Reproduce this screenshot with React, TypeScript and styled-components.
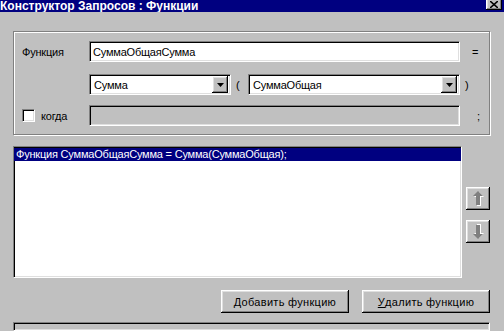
import styled, {createGlobalStyle, css} from "styled-components";

const GlobalStyle = createGlobalStyle`
  html, body {
    margin: 0;
    padding: 0;
    background: #c0c0c0;
  }
  body {
    font-family: "Liberation Sans", Arial, sans-serif;
    font-size: 11px;
    letter-spacing: -0.2px;
    color: #000;
  }
`;

const sunken = css`
  box-sizing: border-box;
  border-top: 1px solid #808080;
  border-left: 1px solid #808080;
  border-right: 1px solid #ffffff;
  border-bottom: 1px solid #ffffff;
  box-shadow: inset 1px 1px 0 #000000, inset -1px -1px 0 #dfdfdf;
`;

const raised = css`
  box-sizing: border-box;
  border: 0;
  background: #c0c0c0;
  box-shadow: inset -1px -1px 0 #000000, inset 1px 1px 0 #ffffff,
    inset -2px -2px 0 #808080, inset 2px 2px 0 #dfdfdf;
`;

const Window = styled.div`
  width: 504px;
  height: 331px;
  overflow: hidden;
  background: #c0c0c0;
  display: flex;
  flex-direction: column;
`;

const TitleBar = styled.div`
  height: 12px;
  flex-shrink: 0;
  background: #000080;
  display: flex;
  justify-content: space-between;
  align-items: flex-start;
  overflow: hidden;
`;

const Title = styled.span`
  color: #fff;
  font-weight: bold;
  font-size: 12px;
  letter-spacing: 0;
  line-height: 12px;
  white-space: nowrap;
`;

const CloseButton = styled.div`
  ${raised};
  width: 16px;
  height: 14px;
  margin-top: -4px;
  margin-right: 2px;
  display: flex;
  align-items: center;
  justify-content: center;
  padding-top: 2px;
`;

const Content = styled.div`
  flex: 1;
  display: flex;
  flex-direction: column;
  padding: 19px 14px 0 13px;
`;

const GroupBox = styled.div`
  box-sizing: border-box;
  height: 104px;
  border: 1px solid #808080;
  box-shadow: inset 1px 1px 0 #ffffff, 1px 1px 0 #ffffff;
  padding: 9px 0 0 8px;
`;

const Row = styled.div<{ $top: number }>`
  display: flex;
  align-items: center;
  height: 21px;
  margin-top: ${p => p.$top}px;
`;

const Label = styled.div`
  width: 67px;
  flex-shrink: 0;
  display: flex;
  align-items: center;
  white-space: nowrap;
`;

const Field = styled.div`
  width: 371px;
  height: 21px;
  flex-shrink: 0;
  display: flex;
  align-items: center;
`;

const TextBox = styled.div<{ $disabled?: boolean }>`
  ${sunken};
  width: 100%;
  height: 100%;
  background: ${p => (p.$disabled ? "#c0c0c0" : "#ffffff")};
  padding: 0 3px;
  display: flex;
  align-items: center;
  white-space: nowrap;
`;

const Suffix = styled.span<{ $left: number }>`
  margin-left: ${p => p.$left}px;
  white-space: nowrap;
`;

const Combo = styled.div<{ $width: number }>`
  ${sunken};
  width: ${p => p.$width}px;
  height: 21px;
  background: #fff;
  display: flex;
  align-items: center;
  justify-content: space-between;
  padding: 2px 2px 2px 4px;
  flex-shrink: 0;
`;

const DropButton = styled.div`
  ${raised};
  width: 16px;
  height: 17px;
  display: flex;
  align-items: center;
  justify-content: center;
`;

const Paren = styled.span`
  margin-left: 5px;
  margin-right: auto;
`;

const CheckBox = styled.div`
  ${sunken};
  width: 13px;
  height: 13px;
  background: #fff;
  flex-shrink: 0;
`;

const CheckLabel = styled.span`
  margin-left: 6px;
`;

const ListRow = styled.div`
  display: flex;
  margin-top: 11px;
`;

const ListBox = styled.div`
  ${sunken};
  width: 449px;
  height: 132px;
  background: #fff;
  padding: 1px 0 0 0;
`;

const ListItem = styled.div<{ $selected?: boolean }>`
  height: 13px;
  line-height: 13px;
  padding-left: 2px;
  white-space: nowrap;
  background: ${p => (p.$selected ? "#000080" : "transparent")};
  color: ${p => (p.$selected ? "#ffffff" : "#000000")};
`;

const ArrowColumn = styled.div`
  display: flex;
  flex-direction: column;
  gap: 10px;
  margin-left: 4px;
  padding-top: 41px;
`;

const ArrowButton = styled.div`
  ${raised};
  width: 24px;
  height: 23px;
  display: flex;
  align-items: center;
  justify-content: center;
`;

const ButtonRow = styled.div`
  display: flex;
  justify-content: flex-end;
  gap: 13px;
  margin-top: 12px;
`;

const PushButton = styled.div`
  ${raised};
  width: 128px;
  height: 23px;
  display: flex;
  align-items: center;
  justify-content: center;
  white-space: nowrap;
  letter-spacing: 0.3px;
`;

const Accel = styled.span`
  text-decoration: underline;
`;

const StatusPanel = styled.div`
  ${sunken};
  margin-top: 9px;
  flex: 1;
  background: #c0c0c0;
`;

function DownTriangle() {
  return (
    <svg width="7" height="4" viewBox="0 0 7 4">
      <polygon points="0,0 7,0 3.5,4" fill="#000" />
    </svg>
  );
}

function Arrow({down}: { down?: boolean }) {
  const head = "0,5 5,0 10,5";
  return (
    <svg width="11" height="15" viewBox="0 0 11 15"
         style={down ? {transform: "scaleY(-1)"} : undefined}>
      <g transform="translate(1,1)">
        <polygon points={head} fill="#fff" />
        <rect x="3" y="5" width="4" height="9" fill="#fff" />
      </g>
      <polygon points={head} fill="#808080" />
      <rect x="3" y="5" width="4" height="9" fill="#808080" />
    </svg>
  );
}

export default function App() {
  return (
    <Window>
      <GlobalStyle />
      <TitleBar>
        <Title>Конструктор Запросов : Функции</Title>
        <CloseButton>
          <svg width="8" height="7" viewBox="0 0 8 7">
            <path d="M0 0 L8 7 M8 0 L0 7" stroke="#000" strokeWidth="1.6" />
          </svg>
        </CloseButton>
      </TitleBar>
      <Content>
        <GroupBox>
          <Row $top={0}>
            <Label>Функция</Label>
            <Field>
              <TextBox>СуммаОбщаяСумма</TextBox>
            </Field>
            <Suffix $left={12}>=</Suffix>
          </Row>
          <Row $top={12}>
            <Label />
            <Field>
              <Combo $width={142}>
                <span>Сумма</span>
                <DropButton><DownTriangle /></DropButton>
              </Combo>
              <Paren>(</Paren>
              <Combo $width={212}>
                <span>СуммаОбщая</span>
                <DropButton><DownTriangle /></DropButton>
              </Combo>
            </Field>
            <Suffix $left={5}>)</Suffix>
          </Row>
          <Row $top={10}>
            <Label>
              <CheckBox />
              <CheckLabel>когда</CheckLabel>
            </Label>
            <Field>
              <TextBox $disabled />
            </Field>
            <Suffix $left={17}>;</Suffix>
          </Row>
        </GroupBox>
        <ListRow>
          <ListBox>
            <ListItem $selected>Функция СуммаОбщаяСумма = Сумма(СуммаОбщая);</ListItem>
          </ListBox>
          <ArrowColumn>
            <ArrowButton><Arrow /></ArrowButton>
            <ArrowButton><Arrow down /></ArrowButton>
          </ArrowColumn>
        </ListRow>
        <ButtonRow>
          <PushButton><Accel>Д</Accel>обавить функцию</PushButton>
          <PushButton><Accel>У</Accel>далить функцию</PushButton>
        </ButtonRow>
        <StatusPanel />
      </Content>
    </Window>
  );
}
